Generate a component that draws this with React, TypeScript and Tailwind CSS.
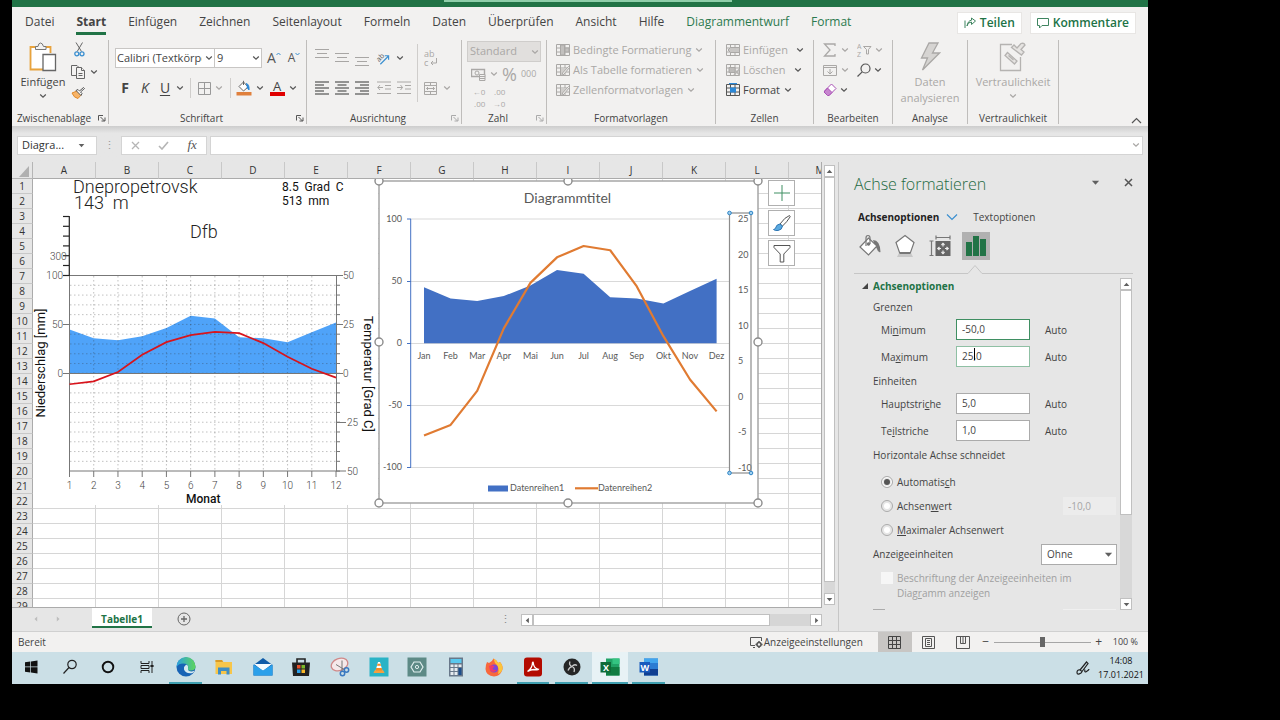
import type { ReactNode } from "react";
import clsx from "clsx";

const months = ["Jan", "Feb", "Mar", "Apr", "Mai", "Jun", "Jul", "Aug", "Sep", "Okt", "Nov", "Dez"];
const columns = ["A", "B", "C", "D", "E", "F", "G", "H", "I", "J", "K", "L", "M"];
const rows = Array.from({ length: 29 }, (_, i) => i + 1);
const tabs = ["Datei", "Start", "Einfügen", "Zeichnen", "Seitenlayout", "Formeln", "Daten", "Überprüfen", "Ansicht", "Hilfe", "Diagrammentwurf", "Format"];

const rain = [45, 36, 34, 38, 46.5, 59, 56, 37, 36, 32, 42, 52];
const temperature = [-5.5, -4, 0.8, 9.6, 16, 19.6, 21.2, 20.6, 15.5, 8.5, 2.4, -2.1];

const toPoints = (values: number[], x: (i: number) => number, y: (v: number) => number) =>
  values.map((v, i) => `${x(i)},${y(v)}`).join(" ");

type ChevronProps = { muted?: boolean; className?: string };

const Chevron = ({ muted, className }: ChevronProps) => (
  <svg width="8" height="6" viewBox="0 0 8 6" className={clsx("shrink-0", className)} aria-hidden="true">
    <path d="M1.2 1.5 4 4.2 6.8 1.5" fill="none" stroke={muted ? "#a8a6a4" : "#555"} strokeWidth="1.2" />
  </svg>
);

const Triangle = ({ dir, size = 7 }: { dir: "up" | "down" | "left" | "right"; size?: number }) => {
  const d = {
    up: "M1 7 5 2.5 9 7Z",
    down: "M1 3 5 7.5 9 3Z",
    left: "M7 1 2.5 5 7 9Z",
    right: "M3 1 7.5 5 3 9Z",
  }[dir];
  return (
    <svg width={size} height={size} viewBox="0 0 10 10" aria-hidden="true">
      <path d={d} fill="#606060" />
    </svg>
  );
};

type ToolProps = { label: string; className?: string; children: ReactNode };

const Tool = ({ label, className, children }: ToolProps) => (
  <button aria-label={label} className={clsx("flex shrink-0 items-center justify-center", className)}>
    {children}
  </button>
);

type GroupProps = { title: string; className: string; launcher?: "on" | "off"; children: ReactNode };

const Group = ({ title, className, launcher, children }: GroupProps) => (
  <section aria-label={title} className={clsx("flex h-[84px] shrink-0 flex-col border-r border-[#bfbdbb]", className)}>
    <div className="min-h-0 flex-1">{children}</div>
    <div className="flex h-3 items-center text-[10px] leading-3 text-[#444]">
      <span className="flex-1 text-center whitespace-nowrap">{title}</span>
      {launcher && (
        <Tool label={`${title}: Optionen`} className="h-3 w-3">
          <svg width="8" height="8" viewBox="0 0 8 8" fill="none" stroke={launcher === "on" ? "#555" : "#aaa"}>
            <path d="M.5 6.5V1.5H5M2.5 3 6.5 7M7 3.5V7H3.5" />
          </svg>
        </Tool>
      )}
    </div>
  </section>
);

/* ---------- ribbon icons ---------- */

const PasteIcon = () => (
  <svg width="28" height="30" viewBox="0 0 28 30" fill="none">
    <path d="M2.500 6H20.500V26.500H2.500Z" fill="#fff" />
    <path d="M7 5H1.500V27.500H14" stroke="#e8a33d" strokeWidth="1.800" />
    <path d="M16 5H21.500V11" stroke="#e8a33d" strokeWidth="1.800" />
    <path d="M6.500 7.500V4.500H9Q9.500 1 11.500 1T14.500 4.500H17V7.500Z" fill="#f3f2f1" stroke="#777" />
    <path d="M14 12.500H26.500V28.500H14Z" fill="#fff" stroke="#666" strokeWidth="1.300" />
  </svg>
);

const ScissorsIcon = () => (
  <svg width="11" height="15" viewBox="0 0 11 15" fill="none">
    <path d="M2 .5 7.500 9.500M8.500 .5 3.200 9.500" stroke="#666" />
    <circle cx="2.800" cy="11.800" r="2" stroke="#3a8fd0" strokeWidth="1.300" />
    <circle cx="8" cy="11.800" r="2" stroke="#3a8fd0" strokeWidth="1.300" />
  </svg>
);

const CopyIcon = () => (
  <svg width="15" height="14" viewBox="0 0 15 14" fill="#f3f2f1" stroke="#666">
    <path d="M5 10.500H.5V.5H6L8 2.500" />
    <path d="M5.500 2.500H10.500L13.500 5.500V13.500H5.500Z" />
    <path d="M10.500 2.500V5.500H13.500M7.500 8.500H11.500M7.500 10.500H11.500" />
  </svg>
);

const PainterIcon = () => (
  <svg width="14" height="12" viewBox="0 0 14 12" fill="none">
    <path d="M1 6 6 4 10 8 7 11.500Q3 11 1 6Z" fill="#f7b468" stroke="#e08a2c" />
    <path d="M5 3.500 10 8.500 11 6.500 9.500 5 13.500 1.500 12.500 .5 8.500 4 7 2.500Z" fill="#fff" stroke="#555" />
  </svg>
);

const CenterLines = () => (
  <svg width="14" height="10" viewBox="0 0 14 10" fill="#a8a6a4" aria-hidden="true">
    <path d="M0 0H14V1H0ZM2 4H12V5H2ZM0 8H14V9H0Z" />
  </svg>
);

const TightLines = ({ align }: { align: "l" | "c" | "r" }) => {
  const widths = [14, 9, 14, 9, 14];
  return (
    <svg width="14" height="14" viewBox="0 0 14 14" aria-hidden="true">
      {widths.map((w, i) => (
        <rect key={i} x={align === "l" ? 0 : align === "c" ? (14 - w) / 2 : 14 - w} y={i * 3 + 0.4} width={w} height="1.200" fill="#555" />
      ))}
    </svg>
  );
};

const IndentIcon = ({ out }: { out?: boolean }) => (
  <svg width="14" height="14" viewBox="0 0 14 14" fill="none" stroke="#aaa8a6">
    <path d="M0 1H14M8 4.500H14M8 8H14M0 12.500H14" />
    <path d={out ? "M6 6.500H.8M3 4 .8 6.500 3 9" : "M0 6.500H5.500M3.500 4 5.500 6.500 3.500 9"} />
  </svg>
);

const CellsIcon = ({ kind }: { kind: "cond" | "table" | "style" | "insert" | "delete" | "format" }) => {
  const on = kind === "format";
  const line = on ? "#555" : "#aaa8a6";
  return (
    <svg width="14" height="14" viewBox="0 0 14 14" fill="none" stroke={line} className="shrink-0">
      <path d="M.5 1.500H13.500V12.500H.5ZM.5 5H13.500M.5 9H13.500M4.500 1.500V12.500M9 1.500V12.500" />
      {kind === "cond" && <path d="M4.500 2V12H8.500V2ZM9 5H13V9H9Z" fill="#c2c0be" />}
      {(kind === "table" || kind === "style") && (
        <>
          <path d="M5 5H13L8 12H5Z" fill="#d0cecc" stroke="none" />
          <path d="M13.500 4.500 8 11 6 13 6.500 10 12.500 3.500Z" fill="#f3f2f1" />
        </>
      )}
      {kind === "insert" && <path d="M4.500 4.500H13.500V9.500H4.500L2 7Z" fill="#c8c6c4" />}
      {kind === "delete" && (
        <>
          <path d="M3 4.500H9V9.500H3Z" fill="#bdbbb9" />
          <path d="M8 6 13.500 12M13.500 6 8 12" strokeWidth="1.500" stroke="#b5b3b1" />
        </>
      )}
      {on && (
        <>
          <path d="M4 4.500H10V9.500H4Z" fill="#2b88d8" stroke="none" />
          <path d="M3 .5H11" stroke="#2b88d8" strokeWidth="1.400" />
        </>
      )}
    </svg>
  );
};

/* ---------- ribbon ---------- */

const Clipboard = () => (
  <Group title="Zwischenablage" launcher="on" className="w-[97px]">
    <div className="flex gap-1 pt-[2px] pl-2">
      <button className="flex w-[46px] flex-col items-center text-[11px] leading-4 text-[#444]">
        <PasteIcon />
        <span className="mt-[2px]">Einfügen</span>
        <Chevron className="mt-[3px]" />
      </button>
      <div className="flex flex-col items-start gap-2 pl-px">
        <Tool label="Ausschneiden" className="ml-[3px]">
          <ScissorsIcon />
        </Tool>
        <div className="flex items-center gap-1">
          <Tool label="Kopieren">
            <CopyIcon />
          </Tool>
          <Tool label="Kopieren: Optionen">
            <Chevron />
          </Tool>
        </div>
        <Tool label="Format übertragen">
          <PainterIcon />
        </Tool>
      </div>
    </div>
  </Group>
);

const FontGroup = () => (
  <Group title="Schriftart" launcher="on" className="w-[198px]">
    <div className="flex items-center pt-2 pl-[6px]">
      <label className="relative flex">
        <select aria-label="Schriftart" className="h-5 w-[100px] appearance-none overflow-hidden border border-[#c8c6c4] bg-white pr-3 pl-px text-[11px] text-[#444]">
          <option>Calibri (Textkörper)</option>
        </select>
        <Chevron className="absolute top-[7px] right-[2px]" />
      </label>
      <label className="relative -ml-px flex">
        <select aria-label="Schriftgrad" className="h-5 w-[48px] appearance-none border border-[#c8c6c4] bg-white pl-[2px] text-[11px] text-[#444]">
          <option>9</option>
        </select>
        <Chevron className="absolute top-[7px] right-[2px]" />
      </label>
      <Tool label="Schriftgrad vergrößern" className="ml-1 h-5 w-4 text-sm text-[#555]">
        A
        <svg width="5" height="12" viewBox="0 0 5 12"><path d="M.5 3 2.500 1 4.500 3" fill="none" stroke="#3a8fd0" /></svg>
      </Tool>
      <Tool label="Schriftgrad verkleinern" className="ml-1 h-5 w-4 text-xs text-[#555]">
        A
        <svg width="5" height="12" viewBox="0 0 5 12"><path d="M.5 1 2.500 3 4.500 1" fill="none" stroke="#3a8fd0" /></svg>
      </Tool>
    </div>
    <div className="mt-[10px] flex h-5 items-center pl-[6px] text-sm text-[#444]">
      <Tool label="Fett" className="w-5 font-bold">F</Tool>
      <Tool label="Kursiv" className="w-5 italic">K</Tool>
      <Tool label="Unterstrichen" className="w-5 underline underline-offset-2">U</Tool>
      <Chevron className="ml-px" />
      <span className="ml-[6px] h-5 w-px bg-[#d0cecc]" />
      <Tool label="Rahmen" className="ml-1 w-[18px]">
        <svg width="13" height="13" viewBox="0 0 13 13" fill="none" stroke="#999">
          <path d="M.5 .5H12.500V12.500H.5ZM6.500 .5V12.500M.5 6.500H12.500" />
        </svg>
      </Tool>
      <Chevron muted className="ml-[2px]" />
      <span className="ml-[7px] h-5 w-px bg-[#d0cecc]" />
      <Tool label="Füllfarbe" className="ml-[5px] w-4">
        <svg width="16" height="16" viewBox="0 0 16 16" fill="none">
          <path d="M3 6.500 7.500 2 12 7 7.500 11Z" fill="#fff" stroke="#666" />
          <path d="M7.500 5V.8" stroke="#666" />
          <path d="M10 3.500Q13.500 4 13 10L11 7.500" fill="#2b88d8" stroke="#2b88d8" />
          <rect x="0.500" y="12" width="15" height="3.500" fill="#e0803c" />
        </svg>
      </Tool>
      <Chevron className="ml-1" />
      <Tool label="Schriftfarbe" className="ml-[5px] w-4">
        <span className="flex w-[15px] flex-col items-center border-b-4 border-[#e00000] text-[13px] leading-3">A</span>
      </Tool>
      <Chevron className="ml-1" />
    </div>
  </Group>
);

const AlignGroup = () => (
  <Group title="Ausrichtung" launcher="off" className="w-[155px]">
    <div className="flex pl-[5px]">
      <div className="w-[105px]">
        <div className="flex h-9 items-center">
          <Tool label="Oben ausrichten" className="mb-2 h-5 w-5"><CenterLines /></Tool>
          <Tool label="Zentriert ausrichten" className="h-5 w-5"><CenterLines /></Tool>
          <Tool label="Unten ausrichten" className="mt-2 h-5 w-5"><CenterLines /></Tool>
          <Tool label="Ausrichtung" className="ml-[3px] w-4">
            <svg width="18" height="18" viewBox="0 0 18 18" fill="none">
              <text x="1" y="11" fontSize="8" fill="#555" transform="rotate(-45 6 8)">ab</text>
              <path d="M6 16 15 7M11 6.500H15.300V11" stroke="#3a8fd0" strokeWidth="1.300" />
            </svg>
          </Tool>
          <Chevron className="ml-[5px]" />
        </div>
        <div className="mt-[2px] flex h-5 items-center">
          <Tool label="Linksbündig" className="w-5"><TightLines align="l" /></Tool>
          <Tool label="Zentriert" className="w-5"><TightLines align="c" /></Tool>
          <Tool label="Rechtsbündig" className="w-5"><TightLines align="r" /></Tool>
          <Tool label="Einzug verkleinern" className="ml-[2px] w-5"><IndentIcon out /></Tool>
          <Tool label="Einzug vergrößern" className="w-5"><IndentIcon /></Tool>
        </div>
      </div>
      <span className="mt-1 h-[58px] w-px bg-[#cfcdcb]" />
      <div className="pl-[6px]">
        <Tool label="Textumbruch" className="h-9 w-[14px]">
          <svg width="14" height="22" viewBox="0 0 14 22" fill="none">
            <text x="0" y="10" fontSize="9" fill="#aaa8a6">ab</text>
            <text x="0" y="19" fontSize="9" fill="#aaa8a6">c</text>
            <path d="M12.500 11V16H7M9 14 7 16 9 18" stroke="#aaa8a6" />
          </svg>
        </Tool>
        <div className="mt-[2px] flex h-5 items-center gap-[6px]">
          <Tool label="Verbinden und zentrieren">
            <svg width="13" height="13" viewBox="0 0 13 13" fill="none" stroke="#aaa8a6">
              <path d="M.5 .5H12.500V12.500H.5ZM.5 3.500H12.500M.5 9.500H12.500M6.500 .5V3.500M6.500 9.500V12.500M2.500 6.500H10.500M4 5 2.500 6.500 4 8M9 5 10.500 6.500 9 8" />
            </svg>
          </Tool>
          <Chevron muted />
        </div>
      </div>
    </div>
  </Group>
);

const NumberGroup = () => (
  <Group title="Zahl" launcher="off" className="w-[85px]">
    <div className="px-[5px] pt-px text-[#aaa8a6]">
      <label className="relative flex">
        <select aria-label="Zahlenformat" disabled className="h-[21px] w-full appearance-none border border-[#cfcdcb] bg-[#e1dfdd] pl-[2px] text-[11px] text-[#aaa8a6]">
          <option>Standard</option>
        </select>
        <Chevron muted className="absolute top-2 right-[2px]" />
      </label>
      <div className="flex h-6 items-center gap-1 pl-1">
        <Tool label="Buchhaltungszahlenformat">
          <svg width="15" height="13" viewBox="0 0 15 13" fill="none" stroke="#aaa8a6">
            <path d="M.5 1.500H13.500V8.500H.5Z" strokeWidth="1.400" />
            <circle cx="6" cy="5" r="2" />
            <path d="M8.500 6.500H14V12.500H8.500ZM8.500 8.500H14M8.500 10.500H14" fill="#f3f2f1" />
          </svg>
        </Tool>
        <Chevron muted />
        <Tool label="Prozentformat" className="text-lg leading-4">%</Tool>
        <Tool label="1.000er-Trennzeichen" className="text-[9px]">000</Tool>
      </div>
      <div className="flex gap-1 pl-1 text-[8px] leading-3">
        <Tool label="Dezimalstelle hinzufügen" className="w-4 text-right"><span>←0<br />.00</span></Tool>
        <Tool label="Dezimalstelle löschen" className="w-4 text-right"><span>.00<br />→0</span></Tool>
      </div>
    </div>
  </Group>
);

type RowProps = { kind: "cond" | "table" | "style" | "insert" | "delete" | "format"; text: string; gap?: string };

const CommandRow = ({ kind, text, gap = "ml-1" }: RowProps) => (
  <button className={clsx("flex h-5 items-center text-[11px] leading-5 whitespace-nowrap", kind === "format" ? "text-[#444]" : "text-[#aaa8a6]")}>
    <CellsIcon kind={kind} />
    <span className="ml-[3px]">{text}</span>
    <Chevron muted={kind === "cond" || kind === "table" || kind === "style"} className={gap} />
  </button>
);

const EditGroup = () => (
  <Group title="Bearbeiten" className="w-[79px]">
    <div className="grid grid-cols-[34px_auto] pl-[9px]">
      <div className="flex h-5 items-center gap-1">
        <Tool label="Summe">
          <svg width="14" height="14" viewBox="0 0 14 14" fill="none" stroke="#aaa8a6" strokeWidth="1.300"><path d="M12 3V1H1.500L7 7 1.500 13H12V11" /></svg>
        </Tool>
        <Chevron muted />
      </div>
      <div className="flex h-5 items-center gap-1">
        <Tool label="Sortieren und Filtern">
          <svg width="15" height="20" viewBox="0 0 15 20" fill="none" stroke="#aaa8a6">
            <text x="0" y="9" fontSize="7" fill="#aaa8a6" stroke="none">A</text>
            <text x="0" y="17" fontSize="7" fill="#aaa8a6" stroke="none">Z</text>
            <path d="M6.500 6.500H14L11.500 9.500V14H9.500V9.500Z" />
          </svg>
        </Tool>
        <Chevron muted className="-ml-px" />
      </div>
      <div className="flex h-5 items-center gap-1">
        <Tool label="Füllbereich">
          <svg width="14" height="13" viewBox="0 0 14 13" fill="none" stroke="#aaa8a6"><path d="M.5 1.500H13.500V11.500H.5ZM.5 3.500H13.500M7 5V10M4.500 7.500 7 10 9.500 7.500" /></svg>
        </Tool>
        <Chevron muted />
      </div>
      <div className="flex h-5 items-center gap-1">
        <Tool label="Suchen und Auswählen">
          <svg width="14" height="14" viewBox="0 0 14 14" fill="none" stroke="#555" strokeWidth="1.200"><circle cx="8.500" cy="5.500" r="4.500" /><path d="M5.200 8.800.5 13.500" /></svg>
        </Tool>
        <Chevron className="-ml-px" />
      </div>
      <div className="flex h-5 items-center gap-1">
        <Tool label="Löschen">
          <svg width="14" height="14" viewBox="0 0 14 14" fill="#fff" stroke="#a94fb5">
            <path d="M8.500 1 13 5.500 6 12.500 1.500 8Z" />
            <path d="M4.500 5 9 9.500 6 12.500H4.500L1 9Z" fill="#c786cf" />
          </svg>
        </Tool>
        <Chevron className="-ml-px" />
      </div>
    </div>
  </Group>
);

const Ribbon = () => (
  <div className="relative flex h-[88px] shrink-0 overflow-hidden pt-[2px]">
    <Clipboard />
    <FontGroup />
    <AlignGroup />
    <NumberGroup />
    <Group title="Formatvorlagen" className="w-[169px]">
      <div className="pl-[9px]">
        <CommandRow kind="cond" text="Bedingte Formatierung" />
        <CommandRow kind="table" text="Als Tabelle formatieren" />
        <CommandRow kind="style" text="Zellenformatvorlagen" />
      </div>
    </Group>
    <Group title="Zellen" className="w-[98px]">
      <div className="pl-[10px]">
        <CommandRow kind="insert" text="Einfügen" gap="ml-2" />
        <CommandRow kind="delete" text="Löschen" gap="ml-2" />
        <CommandRow kind="format" text="Format" />
      </div>
    </Group>
    <EditGroup />
    <Group title="Analyse" className="w-[75px]">
      <button className="flex w-full flex-col items-center pt-[2px] text-[11px] leading-4 text-[#aaa8a6]">
        <svg width="22" height="30" viewBox="0 0 22 30"><path d="M10 1H19L13.500 11H20.500L3.500 28 8.500 16H2.500Z" fill="#d6d4d2" stroke="#aaa8a6" strokeWidth="1.300" /></svg>
        <span className="mt-[2px]">Daten</span>
        <span>analysieren</span>
      </button>
    </Group>
    <Group title="Vertraulichkeit" className="w-[91px]">
      <button className="flex w-full flex-col items-center pt-[2px] text-[11px] leading-4 text-[#aaa8a6]">
        <svg width="28" height="30" viewBox="0 0 28 30" fill="none" stroke="#b5b3b1" strokeWidth="1.300">
          <path d="M13 2.500H1.500V28.500H21.500V15" />
          <path d="M8.500 10.500 18 19 15.500 22 6 13.500ZM9.500 13.500 14.500 18" fill="#e6e4e2" />
          <path d="M12.500 5.500 15 3 18 6 22 1.500Q25 .5 26 3L22 7.500 25 10 22.500 13Z" fill="#e6e4e2" />
        </svg>
        <span className="mt-[2px]">Vertraulichkeit</span>
        <Chevron muted className="mt-[3px]" />
      </button>
    </Group>
    <div className="flex flex-1 items-end justify-end pr-[6px] pb-[2px]">
      <Tool label="Menüband reduzieren">
        <svg width="11" height="7" viewBox="0 0 11 7" fill="none" stroke="#555" strokeWidth="1.200"><path d="M1 6 5.500 1.500 10 6" /></svg>
      </Tool>
    </div>
  </div>
);

const MenuTabs = () => (
  <nav className="flex h-[31px] shrink-0 items-center pr-3 pl-[13px] text-xs text-[#444]">
    <div className="flex flex-1 gap-[22px]">
      {tabs.map((tab, i) => (
        <a
          key={tab}
          href="#"
          className={clsx("border-b-[3px] pt-px leading-[21px] whitespace-nowrap", i === 1 ? "border-[#217346] font-bold" : "border-transparent", i > 9 && "text-[#2c7a4f]")}
        >
          {tab}
        </a>
      ))}
    </div>
    <div className="flex gap-2 font-semibold text-[#217346]">
      <button className="flex h-[22px] items-center gap-1 border border-[#e8e6e4] bg-white px-[6px]">
        <svg width="12" height="12" viewBox="0 0 12 12" fill="none" stroke="#3f8560"><path d="M1 3.500V11M3 9Q3.500 5 7.500 5V7.500L11.500 4 7.500 1V3.200Q4 3.500 3 9Z" /></svg>
        Teilen
      </button>
      <button className="flex h-[22px] items-center gap-1 border border-[#e8e6e4] bg-white px-[6px]">
        <svg width="12" height="12" viewBox="0 0 12 12" fill="none" stroke="#3f8560"><path d="M.5 1.500H11.500V8.500H5L2.500 11V8.500H.5Z" /></svg>
        Kommentare
      </button>
    </div>
  </nav>
);

const FormulaBar = () => (
  <div className="flex h-9 shrink-0 items-center bg-linear-to-b from-[#cdcdcd] to-[#e6e6e6] to-20% px-[5px] pt-[2px]">
    <div className="flex h-[19px] w-[80px] items-center justify-between border border-[#d4d4d4] bg-white pr-[11px] pl-1">
      <input aria-label="Namenfeld" defaultValue="Diagra..." className="w-12 bg-transparent text-[11px] text-[#333] outline-none" />
      <Triangle dir="down" />
    </div>
    <span className="w-6 text-center text-[11px] leading-4 text-[#999]">⋮</span>
    <div className="flex h-[19px] w-[86px] items-center justify-around border border-[#d4d4d4] bg-white">
      <Tool label="Abbrechen"><svg width="9" height="9" viewBox="0 0 9 9" stroke="#b5b5b5" strokeWidth="1.300"><path d="M1 1 8 8M8 1 1 8" /></svg></Tool>
      <Tool label="Eingeben"><svg width="11" height="9" viewBox="0 0 11 9" fill="none" stroke="#b5b5b5" strokeWidth="1.600"><path d="M1 5 4 8 10 1" /></svg></Tool>
      <Tool label="Funktion einfügen" className="font-['Liberation_Serif',serif] text-[13px] leading-4 text-[#555] italic">fx</Tool>
    </div>
    <div className="ml-[3px] flex h-[19px] flex-1 items-center border border-[#d4d4d4] bg-white pr-[2px]">
      <input aria-label="Bearbeitungsleiste" className="min-w-0 flex-1 bg-transparent text-[11px] outline-none" />
      <Chevron muted />
    </div>
  </div>
);

/* ---------- sheet ---------- */

const ClimatePicture = () => {
  const x = (i: number) => 69.500 + i * 24.230;
  const y = (v: number) => 373.500 - v * 0.980;
  const line = "#777";
  return (
    <svg
      role="img"
      aria-label="Klimadiagramm Dnepropetrovsk"
      width="345"
      height="326"
      viewBox="33 179 345 326"
      className="absolute top-[17px] left-[21px] font-[Roboto,sans-serif] font-light"
    >
      <rect x="33" y="179" width="345" height="326" fill="#fff" />
      <polygon points={`69.5,373.5 ${toPoints(rain, x, y)} 336,373.5`} fill="#4fa3f9" />
      <g stroke="#333" strokeOpacity="0.3" strokeDasharray="1.5 2.5">
        {Array.from({ length: 19 }, (_, i) => (
          <path key={i} d={`M70 ${285.300 + i * 9.780}H336`} />
        ))}
        {Array.from({ length: 10 }, (_, i) => (
          <path key={i} d={`M${x(i + 1)} 276V471`} />
        ))}
      </g>
      <g stroke={line} fill="none">
        <path d="M69.500 275.500H336.500V471H69.500ZM63 373.500H343" />
        <path d="M63 324.500H69M336 324.500H343M336 422.500H346M336 471H346M336 275.500H343" />
        {Array.from({ length: 21 }, (_, i) => (
          <path key={i} d={`M336 ${275.500 + i * 9.780}H340`} />
        ))}
        {months.map((m, i) => (
          <path key={m} d={`M${x(i)} 471V477`} />
        ))}
      </g>
      <g stroke="#222" strokeWidth="1.200">
        <path d="M69.300 216V276" />
        {[216.500, 226.300, 236.100, 245.900, 255.700, 265.500, 275.500].map((t) => (
          <path key={t} d={`M63 ${t}H69`} />
        ))}
      </g>
      <polyline points={toPoints(temperature, x, (v) => 373.500 - v * 1.960)} fill="none" stroke="#d8141c" strokeWidth="1.700" />
      <g fontSize="18" fill="#222">
        <text x="73" y="193">Dnepropetrovsk</text>
        <text x="74" y="209">143&nbsp; m</text>
        <text x="190" y="238">Dfb</text>
      </g>
      <g fontSize="12" fill="#111" className="font-normal">
        <text x="282" y="191">8.5&nbsp; Grad&nbsp; C</text>
        <text x="282" y="205">513&nbsp; mm</text>
        <text x="186" y="503" className="font-medium">Monat</text>
      </g>
      <g fontSize="10" fill="#444">
        <text x="50" y="260">300</text>
        <text x="63" y="279" textAnchor="end">100</text>
        <text x="63" y="328" textAnchor="end">50</text>
        <text x="63" y="377" textAnchor="end">0</text>
        <text x="343" y="279">50</text>
        <text x="343" y="328">25</text>
        <text x="343" y="377">0</text>
        <text x="347" y="426">25</text>
        <text x="347" y="475">50</text>
        {months.map((m, i) => (
          <text key={m} x={x(i)} y="488.500" textAnchor="middle">{i + 1}</text>
        ))}
      </g>
      <g fontSize="13" fill="#111" textAnchor="middle" className="font-normal">
        <text transform="translate(45 363) rotate(-90)">Niederschlag [mm]</text>
        <text transform="translate(364 374) rotate(90)">Temperatur [Grad C]</text>
      </g>
    </svg>
  );
};

const DiagramObject = () => {
  const x = (i: number) => 424 + i * 26.600;
  const areaY = (v: number) => 343.300 - v * 1.243;
  const lineY = (v: number) => 396.500 - v * 7.100;
  return (
    <svg
      role="img"
      aria-label="Diagrammtitel"
      width="391"
      height="330"
      viewBox="373 179 391 330"
      className="absolute top-[17px] left-[361px] font-[Lato,sans-serif]"
    >
      <rect x="379" y="181" width="379" height="322" fill="#fff" stroke="#a6a6a6" strokeWidth="1.500" />
      <text x="567.500" y="203" textAnchor="middle" fontSize="14" fill="#595959">Diagrammtitel</text>
      <path d="M411 219H729M411 281.500H729M411 343.500H729M411 405.500H729M411 467.500H729" stroke="#d9d9d9" />
      <polygon points={`424,343.3 ${toPoints(rain, x, areaY)} 716.6,343.3`} fill="#4270c4" />
      <path d="M410.700 219V467.500M407 219H411M407 281.500H411M407 343.500H411M407 405.500H411M407 467.500H411" stroke="#4472c4" />
      <polyline points={toPoints(temperature, x, lineY)} fill="none" stroke="#e07b32" strokeWidth="2.200" strokeLinejoin="round" />
      <g fontSize="9" fill="#595959">
        {[100, 50, 0, -50, -100].map((v, i) => (
          <text key={v} x="402" y={222 + i * 62.100} textAnchor="end">{v}</text>
        ))}
        {[25, 20, 15, 10, 5, 0, -5, -10].map((v, i) => (
          <text key={v} x="738" y={222 + i * 35.550}>{v}</text>
        ))}
        {months.map((m, i) => (
          <text key={m} x={x(i)} y="359" textAnchor="middle">{m}</text>
        ))}
        <rect x="488" y="485.500" width="20" height="6" fill="#4270c4" />
        <text x="510" y="491">Datenreihen1</text>
        <path d="M575 488.300H598" stroke="#e07b32" strokeWidth="2.200" />
        <text x="598" y="491">Datenreihen2</text>
      </g>
      <rect x="729.500" y="213" width="21.500" height="260" fill="none" stroke="#8c8c8c" strokeWidth="1.200" />
      {[[729.500, 213], [751, 213], [729.500, 473], [751, 473]].map(([cx, cy]) => (
        <circle key={`${cx}-${cy}`} cx={cx} cy={cy} r="1.800" fill="#9fd0f0" stroke="#2f86c8" />
      ))}
      {[[379, 181], [568, 181], [758, 181], [379, 342], [758, 342], [379, 503], [568, 503], [758, 503]].map(([cx, cy]) => (
        <circle key={`${cx}-${cy}`} cx={cx} cy={cy} r="4" fill="#fff" stroke="#8c8c8c" strokeWidth="1.400" />
      ))}
    </svg>
  );
};

const ChartButtons = () => (
  <div className="absolute top-[18px] left-[756px] flex flex-col gap-1">
    <Tool label="Diagrammelemente" className="h-[26px] w-[27px] border border-[#b0b0b0] bg-white">
      <svg width="18" height="18" viewBox="0 0 18 18" stroke="#3f8f62"><path d="M9 1V17M1 9H17" /></svg>
    </Tool>
    <Tool label="Diagrammformatvorlagen" className="h-[26px] w-[27px] border border-[#b0b0b0] bg-white">
      <svg width="20" height="18" viewBox="0 0 20 18" fill="#fff" stroke="#555">
        <path d="M8 10Q13 3 17.500 1.500 18.500 2 18 3 15 8 10.500 12Z" />
        <path d="M8 10 10.500 12Q10 16 6 16.500 3 17 1.500 15.500 4 15 4 13 4.500 10.500 8 10Z" fill="#5aa9e0" stroke="#2f78b5" />
      </svg>
    </Tool>
    <Tool label="Diagrammfilter" className="h-[26px] w-[27px] border border-[#b0b0b0] bg-white">
      <svg width="18" height="19" viewBox="0 0 18 19" fill="none" stroke="#555"><path d="M1 1.500H17V3.500L10.800 10V18H7.200V10L1 3.500Z" /></svg>
    </Tool>
  </div>
);

const Sheet = () => (
  <div className="relative min-w-0 flex-1 overflow-hidden border-r border-b border-[#ababab] bg-white">
    <table className="w-[840px] table-fixed border-separate border-spacing-0 text-[10px] leading-[14px] text-[#333]">
      <colgroup>
        <col className="w-[21px]" />
        {columns.map((c) => (
          <col key={c} className="w-[63px]" />
        ))}
      </colgroup>
      <thead>
        <tr className="h-[17px]">
          <th className="border-r border-b border-[#b5b5b5] bg-[#e6e6e6] p-0">
            <svg width="18" height="15" viewBox="0 0 18 15" className="block"><path d="M17 3V14H7Z" fill="#b0b0b0" /></svg>
          </th>
          {columns.map((c) => (
            <th key={c} scope="col" className="border-r border-b border-r-[#c8c8c8] border-b-[#ababab] bg-[#e6e6e6] p-0 font-normal">{c}</th>
          ))}
        </tr>
      </thead>
      <tbody>
        {rows.map((r) => (
          <tr key={r} className="h-[15px]">
            <th scope="row" className="border-r border-b border-r-[#ababab] border-b-[#c8c8c8] bg-[#e6e6e6] p-0 font-normal">{r}</th>
            {columns.map((c) => (
              <td key={c} className="border-r border-b border-[#d6d6d6] p-0" />
            ))}
          </tr>
        ))}
      </tbody>
    </table>
    <ClimatePicture />
    <DiagramObject />
    <ChartButtons />
  </div>
);

const scrollButton = "flex items-center justify-center border border-[#c0c0c0] bg-white";

const SheetTabs = () => (
  <div className="flex h-[23px] shrink-0 items-start">
    <div className="flex h-[22px] w-20 items-center gap-4 pl-[21px] opacity-30">
      <Tool label="Vorheriges Blatt"><Triangle dir="left" size={6} /></Tool>
      <Tool label="Nächstes Blatt"><Triangle dir="right" size={6} /></Tool>
    </div>
    <button className="h-5 w-[60px] border-b-2 border-[#217346] bg-white pt-[3px] text-[10px] leading-4 font-bold text-[#217346]">Tabelle1</button>
    <Tool label="Neues Blatt" className="ml-[25px] h-[22px]">
      <svg width="14" height="14" viewBox="0 0 14 14" fill="none" stroke="#666"><circle cx="7" cy="7" r="6" /><path d="M7 4V10M4 7H10" strokeWidth="1.300" /></svg>
    </Tool>
    <span className="ml-auto pr-[10px] text-[11px] leading-[22px] text-[#888]">⋮</span>
    <div className="mt-[6px] mr-4 flex h-3 w-[301px]">
      <button aria-label="Nach links" className={clsx(scrollButton, "w-3")}><Triangle dir="left" /></button>
      <div className="flex-1 bg-[#d6d6d6]"><div className="h-3 w-[237px] border border-[#c0c0c0] bg-white" /></div>
      <button aria-label="Nach rechts" className={clsx(scrollButton, "w-3")}><Triangle dir="right" /></button>
    </div>
  </div>
);

/* ---------- format pane ---------- */

type FieldProps = { id: string; value: string; className?: string; children: ReactNode };

const Field = ({ id, value, className, children }: FieldProps) => (
  <div className="flex h-[27px] items-center pl-2">
    <label htmlFor={id} className="w-[75px] pt-[2px]">{children}</label>
    <input id={id} defaultValue={value} className={clsx("h-[21px] w-[74px] border bg-white px-[5px] pb-[2px] text-[10px] outline-none", className ?? "border-[#ababab]")} />
    <span className="ml-[15px] pt-[2px]">Auto</span>
  </div>
);

type ChoiceProps = { id: string; checked?: boolean; children: ReactNode };

const Choice = ({ id, checked, children }: ChoiceProps) => (
  <div className="flex items-center">
    <input
      type="radio"
      name="achse"
      id={id}
      defaultChecked={checked}
      className="size-3 appearance-none rounded-full border border-[#ababab] bg-white bg-clip-content p-[2px] checked:bg-[#555] checked:ring-1 checked:ring-white checked:ring-inset"
    />
    <label htmlFor={id} className="ml-1">{children}</label>
  </div>
);

const FormatPane = () => (
  <aside className="flex w-[310px] shrink-0 flex-col border-l border-[#c6c6c6] pr-[15px] pb-[21px] pl-[15px] text-[#444]">
    <header className="mt-[11px] flex h-[22px] items-center">
      <h2 className="flex-1 text-base leading-[22px] font-light text-[#1f6a42]">Achse formatieren</h2>
      <Tool label="Aufgabenbereichsoptionen" className="mb-1"><Triangle dir="down" size={9} /></Tool>
      <Tool label="Schließen" className="mb-1 ml-6">
        <svg width="9" height="9" viewBox="0 0 9 9" stroke="#555" strokeWidth="1.500"><path d="M1 1 8 8M8 1 1 8" /></svg>
      </Tool>
    </header>
    <div className="mt-[14px] flex h-4 items-center pl-1 text-[10px]">
      <button className="flex items-center gap-[7px] font-bold text-[#222]">
        Achsenoptionen
        <svg width="12" height="8" viewBox="0 0 12 8" fill="none" stroke="#3a8fd0" strokeWidth="1.200"><path d="M1 1.500 6 6.500 11 1.500" /></svg>
      </button>
      <button className="ml-[15px]">Textoptionen</button>
    </div>
    <div className="mt-[7px] flex h-7 items-center pl-1">
      <Tool label="Füllung und Linie" className="w-6">
        <svg width="24" height="24" viewBox="0 0 24 24" fill="none" stroke="#777" strokeWidth="1.200">
          <path d="M15 6Q22 6 22.500 18 20 19 19 15L16 9Z" fill="#777" stroke="none" />
          <path d="M2 13 10.500 4 19 12 10.500 21Z" fill="#fff" />
          <path d="M8 12V4Q8 1.500 10 1.500T12 4V10" />
          <circle cx="10.500" cy="10" r="1.200" fill="#777" />
        </svg>
      </Tool>
      <Tool label="Effekte" className="ml-[11px] w-6">
        <svg width="22" height="24" viewBox="0 0 22 24" fill="#fff" stroke="#777" strokeWidth="1.200">
          <path d="M5 19H17L19 23H3Z" fill="#c8c8c8" stroke="none" />
          <path d="M11 1.500 20 8.500 16.500 18.500H5.500L2 8.500Z" />
          <path d="M5.500 19H16.500" strokeWidth="2" />
        </svg>
      </Tool>
      <Tool label="Größe und Eigenschaften" className="ml-[11px] w-6">
        <svg width="22" height="22" viewBox="0 0 22 22" fill="none" stroke="#777" strokeWidth="1.200">
          <path d="M2.500 6V20.500M.5 6H4.500M.5 20.500H4.500M7 2.500H21M7 .5V4.500M21 .5V4.500" />
          <rect x="6.500" y="6" width="15" height="15" fill="#666" stroke="none" />
          <path d="M14 8.500V11.500M14 15.500V18.500M9 13.500H12M16 13.500H19" stroke="#eee" />
          <path d="M12.500 10 14 8.300 15.500 10M12.500 17 14 18.700 15.500 17M10.500 12 8.800 13.500 10.500 15M17.500 12 19.200 13.500 17.500 15" stroke="#eee" />
        </svg>
      </Tool>
      <Tool label="Achsenoptionen" className="ml-[10px] h-7 w-7 bg-[#b1b1b1]">
        <svg width="20" height="22" viewBox="0 0 20 22" fill="#217346"><path d="M0 7H6V21H0ZM7 1H13V21H7ZM14 4H20V21H14Z" /></svg>
      </Tool>
    </div>
    <div className="mt-1 flex h-[10px] items-end">
      <span className="h-px w-[114px] bg-[#c6c6c6]" />
      <svg width="14" height="10" viewBox="0 0 14 10" fill="none" stroke="#c6c6c6"><path d="M0 9.500 7 1.500 14 9.500" /></svg>
      <span className="h-px flex-1 bg-[#c6c6c6]" />
    </div>
    <div className="mt-1 flex min-h-0 flex-1 pl-2 text-[10px] leading-[15px]">
      <div className="min-w-0 flex-1 overflow-hidden">
        <h3 className="flex h-4 items-center gap-[5px] font-bold text-[#217346]">
          <svg width="6" height="6" viewBox="0 0 6 6"><path d="M6 0V6H0Z" fill="#444" /></svg>
          Achsenoptionen
        </h3>
        <div className="pl-[11px]">
          <p className="mt-[6px] mb-px">Grenzen</p>
          <Field id="min" value="-50,0" className="border-[#3f8f62]">Mi<u>n</u>imum</Field>
          <div className="relative">
            <Field id="max" value="25,0" className="border-[#8fc0a4]">Ma<u>x</u>imum</Field>
            <span className="absolute top-[5px] left-[101px] h-3 w-px bg-black" />
          </div>
          <p className="mt-1 mb-px">Einheiten</p>
          <Field id="major" value="5,0">Hauptstri<u>c</u>he</Field>
          <Field id="minor" value="1,0">Te<u>i</u>lstriche</Field>
          <p className="mt-1">Horizontale Achse schneidet</p>
          <div className="mt-[7px] flex flex-col pl-2">
            <div className="flex h-6 items-center"><Choice id="auto" checked>Automatis<u>c</u>h</Choice></div>
            <div className="flex h-6 items-center justify-between pr-1">
              <Choice id="wert">Achsen<u>w</u>ert</Choice>
              <input aria-label="Achsenwert" disabled defaultValue="-10,0" className="h-[18px] w-[53px] bg-[#ececec] px-[5px] text-[10px] text-[#a6a6a6]" />
            </div>
            <div className="flex h-6 items-center"><Choice id="maxwert"><u>M</u>aximaler Achsenwert</Choice></div>
          </div>
          <div className="mt-[2px] flex items-center justify-between pr-[3px]">
            <label htmlFor="units">Anzeigeeinheiten</label>
            <div className="relative">
              <select id="units" className="block h-[21px] w-[76px] appearance-none border border-[#ababab] bg-white pl-[5px] text-[10px]">
                <option>Ohne</option>
              </select>
              <span className="absolute top-[6px] right-1"><Triangle dir="down" size={9} /></span>
            </div>
          </div>
          <div className="mt-[6px] flex items-start gap-1 pl-2 text-[#a0a0a0]">
            <input id="caption" type="checkbox" disabled className="mt-px size-3 shrink-0 appearance-none bg-[#f6f6f6]" />
            <label htmlFor="caption">Beschriftung der Anzeigeeinheiten im<br />Diag<u>r</u>amm anzeigen</label>
          </div>
          <div className="mt-2 flex items-start justify-between pr-1">
            <input id="log" aria-label="Logarithmische Skalierung" type="checkbox" className="size-3 appearance-none border border-[#ababab] bg-white" />
            <input aria-label="Basis" disabled className="h-[18px] w-[53px] bg-[#f0f0f0]" />
          </div>
        </div>
      </div>
      <div className="mr-px flex w-3 flex-col bg-[#d8d8d8]">
        <button aria-label="Nach oben" className={clsx(scrollButton, "h-3")}><Triangle dir="up" /></button>
        <div className="h-[225px] border border-[#c0c0c0] bg-white" />
        <button aria-label="Nach unten" className={clsx(scrollButton, "mt-auto h-3")}><Triangle dir="down" /></button>
      </div>
    </div>
  </aside>
);

/* ---------- status bar and taskbar ---------- */

const StatusBar = () => (
  <footer className="flex h-[21px] shrink-0 items-center border-t border-[#d0d0d0] bg-[#f2f1f0] pr-[10px] pl-[6px] text-[10px] text-[#444]">
    <span className="flex-1">Bereit</span>
    <button className="flex items-center gap-px">
      <svg width="13" height="13" viewBox="0 0 13 13" fill="none" stroke="#555"><path d="M5 9.500H.5V1.500H11.500V5M3 11.500H5" /><circle cx="9" cy="8.500" r="2" strokeWidth="1.500" /><path d="M9 5V12M5.500 8.500H12.500" strokeDasharray="1.500 4" strokeWidth="1.500" /></svg>
      Anzeigeeinstellungen
    </button>
    <Tool label="Normal" className="ml-[15px] h-5 w-[34px] bg-[#c8c6c4]">
      <svg width="13" height="13" viewBox="0 0 13 13" fill="none" stroke="#444"><path d="M.5 .5H12.500V12.500H.5ZM.5 4.500H12.500M.5 8.500H12.500M4.500 .5V12.500M8.500 .5V12.500" /></svg>
    </Tool>
    <Tool label="Seitenlayout" className="h-5 w-[34px]">
      <svg width="13" height="13" viewBox="0 0 13 13" fill="none" stroke="#555"><path d="M.5 .5H12.500V12.500H.5ZM3.500 2.500H9.500V10.500H3.500ZM5 4.500H8M5 6.500H8M5 8.500H8" /></svg>
    </Tool>
    <Tool label="Umbruchvorschau" className="h-5 w-[34px]">
      <svg width="14" height="13" viewBox="0 0 14 13" fill="none" stroke="#555"><path d="M.5 .5H13.500V12.500H.5ZM4.500 .5V7.500H9.500V.5M7 .5V7" /></svg>
    </Tool>
    <Tool label="Verkleinern" className="w-3 text-xs">−</Tool>
    <div className="relative mx-[2px] flex h-3 w-[97px] items-center">
      <span className="h-px w-full bg-[#a6a6a6]" />
      <span className="absolute left-[46px] h-[10px] w-[5px] bg-[#666]" />
      <input type="range" aria-label="Zoom" min="10" max="200" defaultValue="100" className="absolute inset-0 w-full opacity-0" />
    </div>
    <Tool label="Vergrößern" className="w-3 text-xs">+</Tool>
    <span className="ml-2 text-[9px] whitespace-nowrap">100 %</span>
  </footer>
);

const TaskIcon = ({ children }: { children: ReactNode }) => (
  <svg width="20" height="20" viewBox="0 0 20 20" fill="none">{children}</svg>
);

const apps: { name: string; open?: boolean; active?: boolean; icon: ReactNode }[] = [
  { name: "Start", icon: <path d="M4 5.300 9.300 4.500V9.600H4ZM10 4.400 16.500 3.500V9.600H10ZM4 10.300H9.300V15.500L4 14.700ZM10 10.300H16.500V16.500L10 15.600Z" fill="#111" /> },
  { name: "Suche", icon: <g stroke="#222" strokeWidth="1.200"><circle cx="12" cy="7.500" r="4.200" /><path d="M9 10.500 3.500 16.500" /></g> },
  { name: "Cortana", icon: <circle cx="10" cy="10" r="5.300" stroke="#111" strokeWidth="1.900" /> },
  { name: "Aktive Anwendungen", icon: <path d="M4 4V6.500H12V4M4 16V13.500H12V16M4 8.500H12V11.500H4ZM15 4V16M13.700 8.500H16.300V9.500H13.700Z" stroke="#222" /> },
  {
    name: "Microsoft Edge",
    open: true,
    icon: (
      <>
        <defs>
          <linearGradient id="edge" x1="0" y1="0" x2="1" y2="0"><stop offset="0" stopColor="#2b9fe0" /><stop offset="1" stopColor="#5ed55b" /></linearGradient>
        </defs>
        <circle cx="10" cy="10" r="9.500" fill="#1763b5" />
        <path d="M.5 10A9.500 9.500 0 0 1 19.500 9Q19.800 13.500 15 13.500 11.500 13.500 12 11.500 13 8 9.500 6.800 3.500 5.500.5 10Z" fill="url(#edge)" />
        <path d="M12 11Q12.500 8.200 10 7.800 7.500 9.500 8 12.500 9.500 17 16.500 16 18 15 18.500 13.500 16 15 13 14 11.500 13 12 11Z" fill="#d5e9f0" />
      </>
    ),
  },
  { name: "Explorer", icon: <><path d="M1.500 3H8L9.500 5H18V17H1.500Z" fill="#f7c64a" /><path d="M1.500 3H8L9 5H1.500Z" fill="#d89a28" /><path d="M4 17.500V10.500H15.500V17.500H12.500V14H7V17.500Z" fill="#3f8ec4" /></> },
  { name: "Mail", icon: <><path d="M.5 8 10 1 19.500 8V18.500H.5Z" fill="#0f5ba8" /><path d="M1 7H19L10 14Z" fill="#f4fbff" /><path d="M.5 7.500 10 13.500 19.500 7.500V18.500H.5Z" fill="#2ba0ea" /></> },
  { name: "Store", icon: <><path d="M6 6V2H14V6" stroke="#222" strokeWidth="1.600" /><path d="M1 5.500H19L18 19H2Z" fill="#222" /><path d="M6 8H9.500V11.500H6Z" fill="#e8502a" /><path d="M10.500 8H14V11.500H10.500Z" fill="#7db928" /><path d="M6 12.500H9.500V16H6Z" fill="#2ba0ea" /><path d="M10.500 12.500H14V16H10.500Z" fill="#f8b82a" /></> },
  { name: "Snipping Tool", icon: <><ellipse cx="9.500" cy="7.500" rx="8.500" ry="6" transform="rotate(-20 9.500 7.500)" fill="#f5e9ea" stroke="#d08888" strokeWidth="1.300" /><path d="M6 7.500 15 13M12 3.500 12 15" stroke="#777" /><circle cx="16.500" cy="13" r="2.200" stroke="#3a78c0" strokeWidth="1.500" /><circle cx="12.500" cy="16.500" r="2.200" stroke="#3a78c0" strokeWidth="1.500" /></> },
  { name: "VLC", icon: <><path d="M.5 .5H19.500V19.500H.5Z" fill="#29b3c6" /><path d="M9 5H11L13.500 14H6.500Z" fill="#fff" /><path d="M8.500 6.800H11.500L12 8.800H8ZM7.200 11H12.800L13.500 14H6.500Z" fill="#f08a24" /><path d="M5.500 13.500H14.500L15.500 16H4.500Z" fill="#f5a040" /></> },
  { name: "Kamera", icon: <><path d="M.5 .5H19.500V19.500H.5Z" fill="#5d8a86" /><path d="M7 5H13L16 10 13 15H7L4 10Z" stroke="#dfeeee" strokeWidth="1.200" /><circle cx="10" cy="10" r="1.600" stroke="#dfeeee" /></> },
  { name: "Rechner", icon: <><path d="M3 .5H17V19.500H3Z" fill="#68788a" /><path d="M4.500 2H15.500V6H4.500Z" fill="#5ac8ee" /><path d="M4.500 7.500H7.500V10H4.500ZM8.500 7.500H11.500V10H8.500ZM12.500 7.500H15.500V10H12.500ZM4.500 11H7.500V14H4.500ZM8.500 11H11.500V14H8.500ZM4.500 15H7.500V18H4.500ZM8.500 15H11.500V18H8.500Z" fill="#e6ecf0" /><path d="M12.500 11H15.500V18H12.500Z" fill="#1c4e8c" /></> },
  { name: "Firefox", icon: <><path d="M3 5 5 6Q8 5 9.500 1.500 13 3 14 6L16 5Q19.500 9 18.300 13 16 19.500 10 19.500 2 19 1.500 12 1.500 8 3 5Z" fill="#f8673c" /><path d="M9.500 1.500Q13 3 14 6L16 5Q19.500 9 18.300 13 17 16 14 17 16 10 11 6Z" fill="#fcc43a" /><circle cx="10" cy="11.500" r="4" fill="#7a48d8" /><path d="M5 9Q8 7.500 10.500 9.500L8.500 11.500Q9.500 13.500 12.500 13 9 16.500 6 13.500Z" fill="#f0386a" /></> },
  { name: "Acrobat", open: true, icon: <><rect x="1" y=".5" width="18" height="19" rx="3" fill="#b30b00" /><path d="M4.500 14.500Q9.500 11 9.500 5.500 10 4.500 10.300 6 10.500 11 15.500 12.300 15 13.500 11 12.500 7.500 12.500 4.500 14.500Z" stroke="#fff" strokeWidth="1.300" /></> },
  { name: "OBS", open: true, icon: <><circle cx="10" cy="10" r="8.500" fill="#262626" /><path d="M8 4.500Q6.500 8 10 9.500 12.500 6.500 15 8.500M10 9.500Q7.500 10 6 13.500M10 9.500Q13.500 11 12 15" stroke="#c8c8c8" strokeWidth="1.300" /></> },
  { name: "Excel", open: true, active: true, icon: <><path d="M6 1.500H19.500V18.500H6Z" fill="#21a366" /><path d="M12.500 1.500H19.500V7H12.500Z" fill="#33c481" /><path d="M6 10H19.500V18.500H6Z" fill="#107c41" /><path d="M.5 5H11V15.500H.5Z" fill="#0e6b38" /><text x="3" y="13.500" fontSize="9" fontWeight="700" fill="#fff">X</text></> },
  { name: "Word", open: true, icon: <><path d="M5 1.500H19V18.500H5Z" fill="#2b7cd3" /><path d="M5 1.500H19V6H5Z" fill="#41a5ee" /><path d="M5 12H19V18.500H5Z" fill="#103f91" /><path d="M.5 5H11V15.500H.5Z" fill="#185abd" /><text x="1.500" y="13.500" fontSize="9" fontWeight="700" fill="#fff">W</text></> },
];

const Taskbar = () => (
  <div className="flex h-8 shrink-0 items-stretch justify-between bg-[#cbdfe6] pr-1">
    <div className="grid w-[656px] grid-cols-17">
      {apps.map(({ name, open, active, icon }) => (
        <button
          key={name}
          aria-label={name}
          className={clsx("flex items-center justify-center border-b-2", open ? "border-[#3f9fb0]" : "border-transparent", active ? "mx-px bg-[#e8f2f5]" : "mx-[3px]")}
        >
          <TaskIcon>{icon}</TaskIcon>
        </button>
      ))}
    </div>
    <div className="flex items-center gap-2 text-[#111]">
      <Tool label="Windows Ink">
        <svg width="14" height="14" viewBox="0 0 14 14" fill="none" stroke="#222" strokeWidth="1.200"><path d="M4 9 10.500 1 12 2.500 6 10.500ZM4 9Q1 8.500 1 11.500T5 12Q6 11 6 10.500M9 8.500Q8 12 10.500 10.500T13 8" /></svg>
      </Tool>
      <time className="text-center text-[9px] leading-[14px]">14:08<br />17.01.2021</time>
    </div>
  </div>
);

const App = () => (
  <div className="h-screen overflow-hidden bg-black pr-[132px] pb-9 pl-3 font-['Open_Sans','Noto_Sans',sans-serif]">
    <div className="flex h-full flex-col bg-[#f2f1f0]">
      <div className="h-[7px] shrink-0 bg-[#217346]">
        <div className="ml-[432px] h-[2px] w-72 bg-[#8fceaa]" />
      </div>
      <MenuTabs />
      <Ribbon />
      <FormulaBar />
      <main className="flex min-h-0 flex-1 bg-[#e6e6e6]">
        <div className="flex min-w-0 flex-1 flex-col">
          <div className="flex min-h-0 flex-1">
            <Sheet />
            <div className="my-[3px] mr-[3px] ml-[2px] flex w-[11px] shrink-0 flex-col bg-[#d8d8d8]">
              <button aria-label="Nach oben" className={clsx(scrollButton, "h-3")}><Triangle dir="up" /></button>
              <div className="h-[405px] border border-[#c0c0c0] bg-white" />
              <button aria-label="Nach unten" className={clsx(scrollButton, "mt-auto h-3")}><Triangle dir="down" /></button>
            </div>
          </div>
          <SheetTabs />
        </div>
        <FormatPane />
      </main>
      <StatusBar />
      <Taskbar />
    </div>
  </div>
);

export default App;
